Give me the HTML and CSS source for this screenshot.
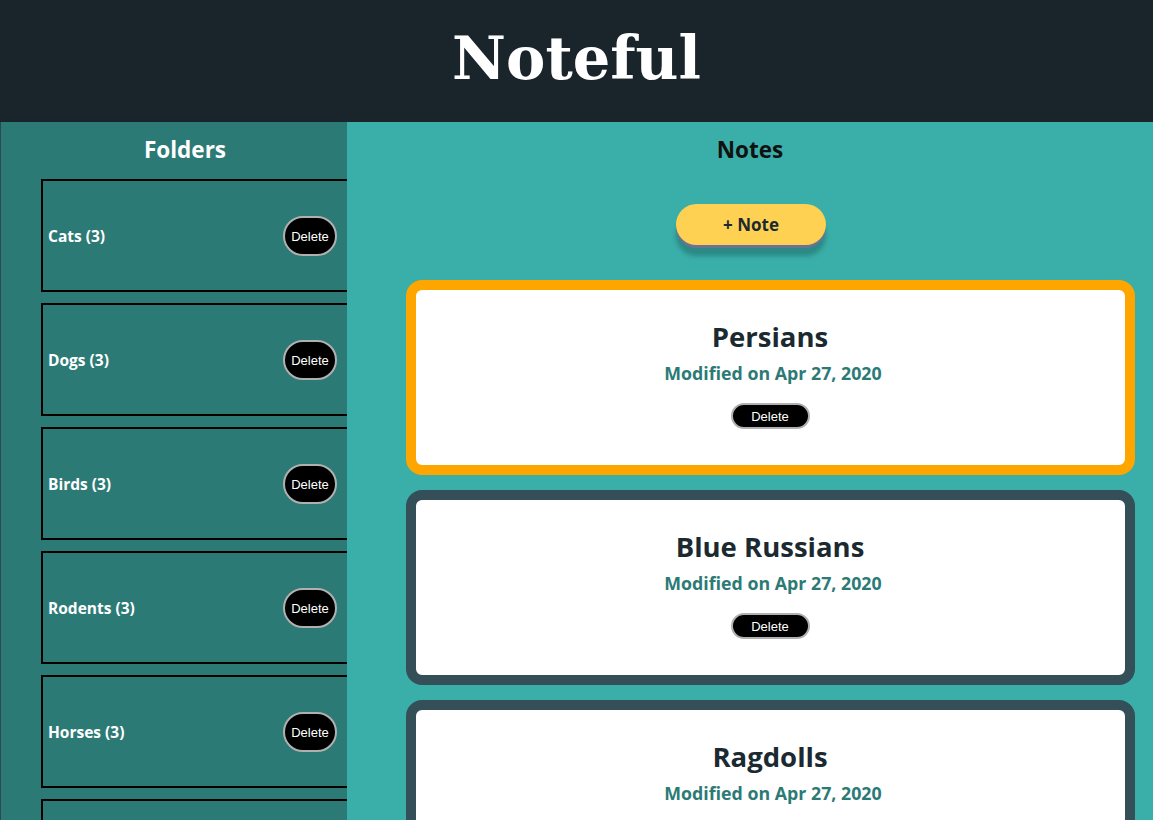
FILE: index.html
```html
<!DOCTYPE html>
<html lang="en">
<head>
<meta charset="utf-8">
<title>Noteful</title>
<link rel="stylesheet" href="styles.css">
</head>
<body>
<header class="app-header">
  <h1 class="app-title">Noteful</h1>
</header>
<div class="app-body">
  <nav class="sidebar">
    <h2 class="section-title side">Folders</h2>
    <ul class="folder-list">
      <li class="folder"><span class="folder-name">Cats (3)</span><button class="folder-delete">Delete</button></li>
      <li class="folder"><span class="folder-name">Dogs (3)</span><button class="folder-delete">Delete</button></li>
      <li class="folder"><span class="folder-name">Birds (3)</span><button class="folder-delete">Delete</button></li>
      <li class="folder"><span class="folder-name">Rodents (3)</span><button class="folder-delete">Delete</button></li>
      <li class="folder"><span class="folder-name">Horses (3)</span><button class="folder-delete">Delete</button></li>
      <li class="folder"><span class="folder-name">Fish (3)</span><button class="folder-delete">Delete</button></li>
    </ul>
  </nav>
  <main class="notes">
    <h2 class="section-title dark">Notes</h2>
    <div class="add-wrap"><button class="add-note">+ Note</button></div>
    <ul class="note-list">
      <li class="note active">
        <h3 class="note-title">Persians</h3>
        <p class="note-date">Modified on Apr 27, 2020</p>
        <button class="note-delete">Delete</button>
      </li>
      <li class="note">
        <h3 class="note-title">Blue Russians</h3>
        <p class="note-date">Modified on Apr 27, 2020</p>
        <button class="note-delete">Delete</button>
      </li>
      <li class="note">
        <h3 class="note-title">Ragdolls</h3>
        <p class="note-date">Modified on Apr 27, 2020</p>
        <button class="note-delete">Delete</button>
      </li>
    </ul>
  </main>
</div>
</body>
</html>
```

FILE: styles.css
```css
* { box-sizing: border-box; }
html, body { margin: 0; padding: 0; }
body {
  font-family: "Open Sans", "Noto Sans", sans-serif;
  background: #3aaea8;
  overflow: hidden;
  height: 820px;
}
.app-header {
  height: 122px;
  background: #19242b;
  display: flex;
  align-items: center;
  justify-content: center;
}
.app-title {
  margin: 0;
  color: #fff;
  font-family: "DejaVu Serif", "Liberation Serif", serif;
  font-weight: bold;
  font-size: 59px;
  line-height: 1;
  padding-bottom: 6px;
}
.app-body {
  display: flex;
  border-left: 1px solid #2a4a50;
  height: 698px;
}
.sidebar {
  width: 346px;
  flex: none;
  background: #2c7a76;
  overflow: hidden;
}
.section-title {
  margin: 0;
  height: 56px;
  padding-top: 14px;
  text-align: center;
  color: #fff;
  font-size: 22.5px;
  line-height: 28px;
  font-weight: 700;
}
.section-title.side { padding-left: 22px; }
.section-title.dark { color: #111; }
.folder-list {
  list-style: none;
  margin: 1px -20px 0 0;
  padding: 0 0 0 40px;
}
.folder {
  height: 113px;
  margin-bottom: 11px;
  border: 2px solid #000;
  display: flex;
  align-items: center;
  justify-content: space-between;
  padding: 1px 28px 0 5px;
}
.folder-name {
  color: #fff;
  font-weight: 700;
  font-size: 15.5px;
}
.folder-delete {
  width: 54px;
  height: 40px;
  padding: 0;
  border-radius: 20px;
  background: #000;
  color: #fff;
  border: 2px solid #b0b0b0;
  font-family: "Liberation Sans", Arial, sans-serif;
  font-size: 13px;
}
.notes {
  flex: 1;
  background: #3aaea8;
}
.add-wrap {
  display: flex;
  justify-content: center;
  padding: 26px 0 0 2px;
}
.add-note {
  width: 150px;
  height: 41px;
  border: none;
  border-radius: 21px;
  background: #ffd152;
  color: #1b2a31;
  font-family: "Open Sans", "Noto Sans", sans-serif;
  font-weight: 700;
  font-size: 17px;
  box-shadow: 0 3px 0 #6b7394, 0 11px 4px rgba(20, 70, 70, 0.35);
}
.note-list {
  list-style: none;
  margin: 35px 0 0 0;
  padding: 0 0 0 40px;
}
.note {
  width: 729px;
  margin: 0 auto 15px;
  background: #fff;
  border: 10px solid #354f58;
  border-radius: 16px;
  text-align: center;
  padding: 30px 0 36px;
}
.note.active { border-color: #ffa500; }
.note-title {
  margin: 0;
  font-size: 27.5px;
  line-height: 34px;
  font-weight: 700;
  color: #1b2a31;
}
.note-date {
  margin: 7px 0 0;
  padding-left: 6px;
  font-size: 17.8px;
  line-height: 24px;
  font-weight: 700;
  color: #2c7a76;
}
.note-delete {
  margin-top: 18px;
  width: 79px;
  height: 26px;
  padding: 0;
  border-radius: 13px;
  background: #000;
  color: #fff;
  border: 2px solid #b0b0b0;
  font-family: "Liberation Sans", Arial, sans-serif;
  font-size: 13px;
}
```
